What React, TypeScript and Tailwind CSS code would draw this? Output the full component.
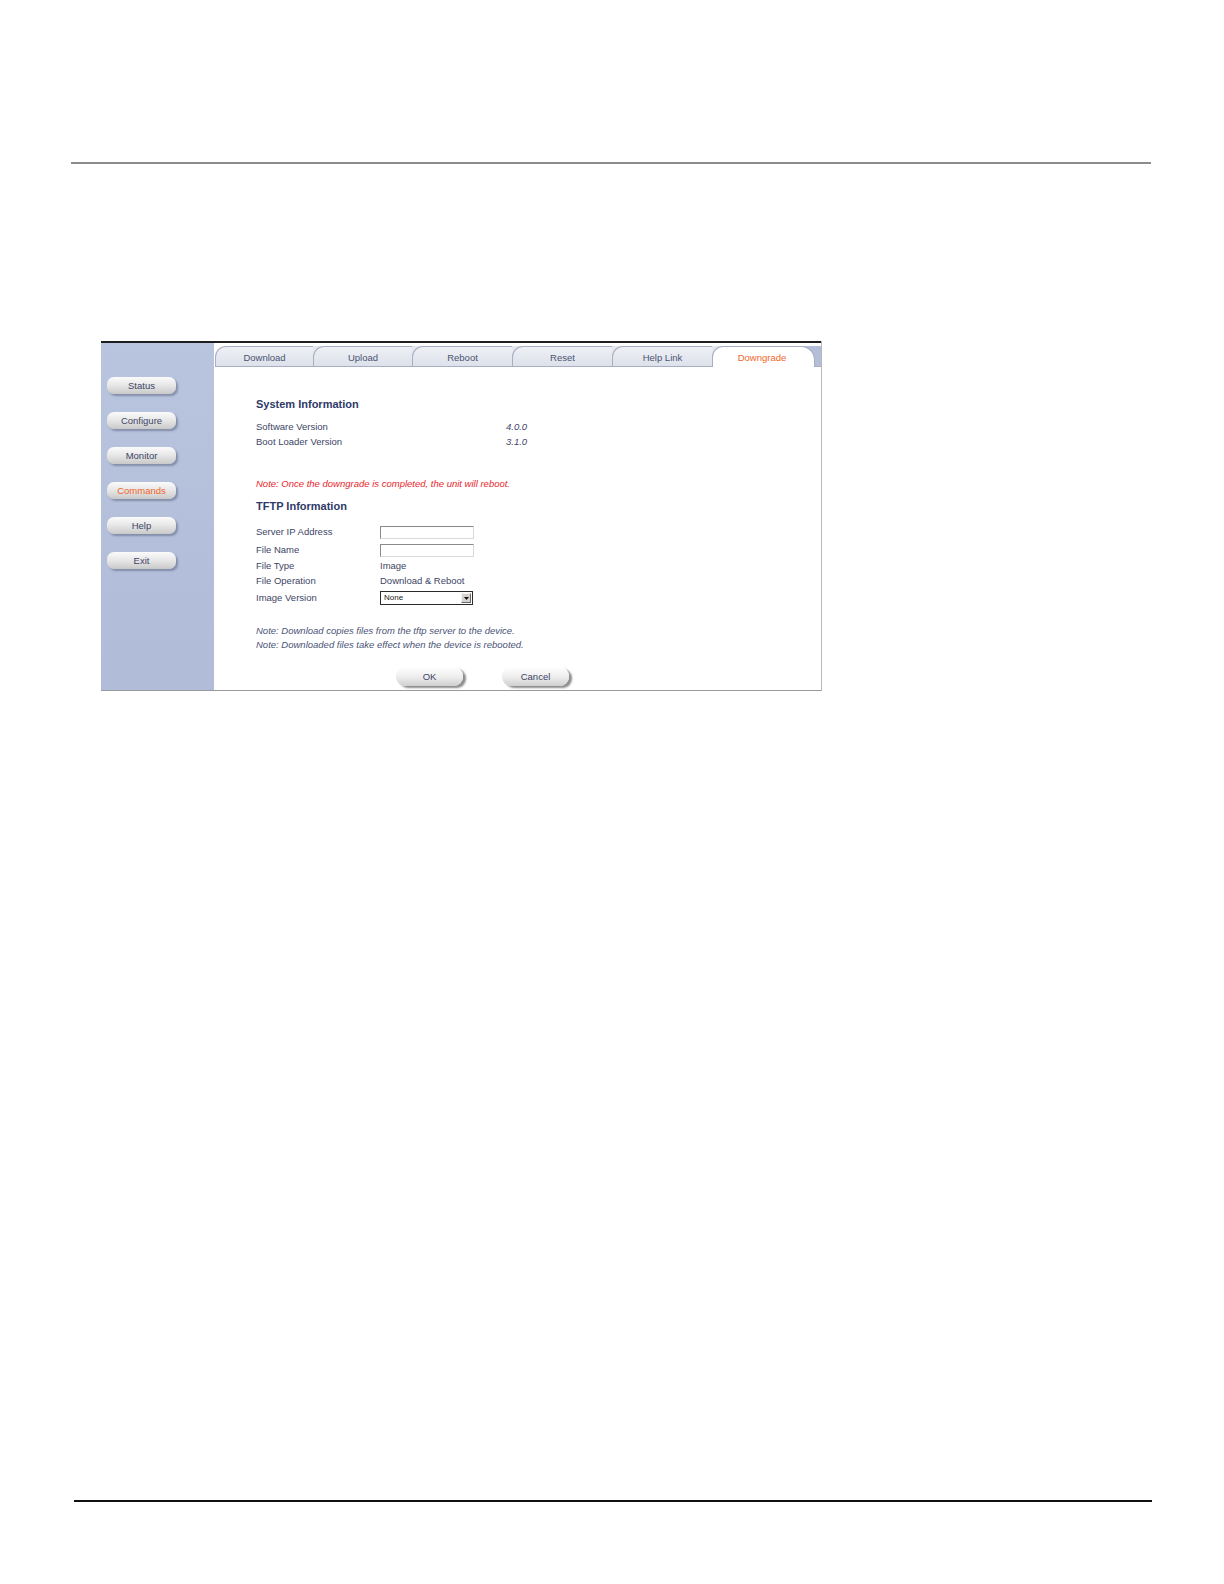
import React from "react";

// ---------------------------------------------------------------------------
// Data
// ---------------------------------------------------------------------------

const tabs = [
  { label: "Download", w: "w-[98px]", under: "bg-white" },
  { label: "Upload", w: "w-[99px]", under: "bg-[#e4e7ee]" },
  { label: "Reboot", w: "w-[100px]", under: "bg-[#e4e7ee]" },
  { label: "Reset", w: "w-[100px]", under: "bg-[#e4e7ee]" },
  { label: "Help Link", w: "w-[100px]", under: "bg-[#e4e7ee]" },
];

const sideItems = ["Status", "Configure", "Monitor", "Commands", "Help", "Exit"];

// ---------------------------------------------------------------------------
// Pieces
// ---------------------------------------------------------------------------

function SideButton({ label }: { label: string }) {
  const active = label === "Commands";
  return (
    <div
      className={`flex h-[17px] w-[69px] items-center justify-center rounded-[7px] bg-[linear-gradient(to_bottom,#fbfbfb,#e6e6e6_50%,#c9c9c9)] text-[9.5px] leading-none shadow-[2px_2px_2px_rgba(90,100,130,0.55)] ${
        active ? "text-[#f0642a]" : "text-[#3d4566]"
      }`}
    >
      {label}
    </div>
  );
}

function PillButton({ label }: { label: string }) {
  return (
    <div className="flex h-[19px] w-[67px] items-center justify-center rounded-[9px] bg-[linear-gradient(to_bottom,#ffffff,#ececec_55%,#cfcfcf)] text-[9.5px] leading-none text-[#3d4566] shadow-[3px_2px_2px_#8d8d8d]">
      {label}
    </div>
  );
}

function TextInput() {
  return (
    <div className="h-[13px] w-[94px] border border-t-[#8a8a8a] border-l-[#8a8a8a] border-b-[#dadada] border-r-[#dadada] bg-white" />
  );
}

function Row({ label, h, children }: { label: string; h: string; children?: React.ReactNode }) {
  return (
    <div className={`flex items-center ${h}`}>
      <span className="w-[124px]">{label}</span>
      {children}
    </div>
  );
}

// ---------------------------------------------------------------------------
// Page
// ---------------------------------------------------------------------------

export default function App() {
  return (
    <div className="relative h-[1584px] w-[1224px] bg-white font-['Liberation_Sans',Arial,sans-serif]">
      {/* header rule */}
      <div className="pl-[71px] pr-[73px] pt-[162px]">
        <div className="h-[2px] bg-[#8c8c8c]" />
      </div>

      {/* screenshot frame */}
      <div className="ml-[101px] mt-[177px] flex h-[350px] w-[721px] flex-col border-r border-b border-r-[#b8b8b8] border-b-[#9a9a9a]">
        <div className="h-[2px] bg-[#1e1e1e]" />
        <div className="flex flex-1">
          {/* sidebar */}
          <div className="flex w-[113px] flex-col gap-[18px] bg-[linear-gradient(to_bottom,#b9c4de,#b0bcd8)] pl-[6px] pt-[34px]">
            {sideItems.map((s) => (
              <SideButton key={s} label={s} />
            ))}
          </div>

          {/* main */}
          <div className="flex flex-1 flex-col bg-white text-[9.5px] text-[#3d4566]">
            {/* tab bar */}
            <div className="flex h-[24px] items-end pl-[1px]">
              {tabs.map((t) => (
                <div key={t.label} className={`h-[21px] ${t.w} ${t.under}`}>
                  <div className="flex h-full items-center justify-center rounded-tl-[11px] border-t border-l border-b border-[#a7afc1] bg-[linear-gradient(to_bottom,#eef0f5,#dde1ea)] pt-[3px] text-[#4a5372]">
                    {t.label}
                  </div>
                </div>
              ))}
              <div className="h-[21px] w-[103px] bg-[linear-gradient(to_right,#e4e7ee_50%,#b3bed9_50%)]">
                <div className="flex h-full items-center justify-center rounded-tl-[11px] rounded-tr-[14px] border-t border-l border-r border-[#a7afc1] bg-white pr-[3px] pt-[3px] text-[#f0642a]">
                  Downgrade
                </div>
              </div>
              <div className="h-[21px] flex-1 border-b border-[#a7afc1] bg-[#b3bed9]" />
            </div>

            {/* content */}
            <div className="flex flex-col pl-[42px] pt-[29px]">
              <div className="flex h-[16px] items-center text-[11px] font-bold text-[#2e3a68]">
                System Information
              </div>
              <div className="mt-[8px] flex h-[15px] items-center">
                <span className="w-[250px]">Software Version</span>
                <span className="italic">4.0.0</span>
              </div>
              <div className="flex h-[15px] items-center">
                <span className="w-[250px]">Boot Loader Version</span>
                <span className="italic">3.1.0</span>
              </div>

              <div className="mt-[27px] flex h-[15px] items-center italic text-[#e8262b]">
                Note: Once the downgrade is completed, the unit will reboot.
              </div>

              <div className="mt-[6px] flex h-[16px] items-center text-[11px] font-bold text-[#2e3a68]">
                TFTP Information
              </div>

              <div className="mt-[9px] flex flex-col">
                <Row label="Server IP Address" h="h-[18px]">
                  <TextInput />
                </Row>
                <Row label="File Name" h="h-[18px]">
                  <TextInput />
                </Row>
                <Row label="File Type" h="h-[15px]">
                  <span>Image</span>
                </Row>
                <Row label="File Operation" h="h-[14px]">
                  <span>Download &amp; Reboot</span>
                </Row>
                <Row label="Image Version" h="h-[20px]">
                  <div className="flex h-[14px] w-[93px] items-center justify-between border border-[#2a2a2a] bg-white pl-[3px] pr-[1px]">
                    <span className="text-[8px] text-[#222]">None</span>
                    <div className="flex h-[10px] w-[10px] items-center justify-center border border-t-[#f4f4f4] border-l-[#f4f4f4] border-b-[#6a6a6a] border-r-[#6a6a6a] bg-[#d6d3cc]">
                      <svg width="5" height="3" viewBox="0 0 5 3">
                        <path d="M0 0h5L2.5 3z" fill="#111" />
                      </svg>
                    </div>
                  </div>
                </Row>
              </div>

              <div className="mt-[16px] flex h-[14px] items-center italic text-[#4a5476]">
                Note: Download copies files from the tftp server to the device.
              </div>
              <div className="flex h-[15px] items-center italic text-[#4a5476]">
                Note: Downloaded files take effect when the device is rebooted.
              </div>

              <div className="ml-[140px] mt-[14px] flex gap-[39px]">
                <PillButton label="OK" />
                <PillButton label="Cancel" />
              </div>
            </div>
          </div>
        </div>
      </div>

      {/* footer rule */}
      <div className="ml-[74px] mt-[809px] h-[2px] w-[1078px] bg-[#111]" />
    </div>
  );
}
